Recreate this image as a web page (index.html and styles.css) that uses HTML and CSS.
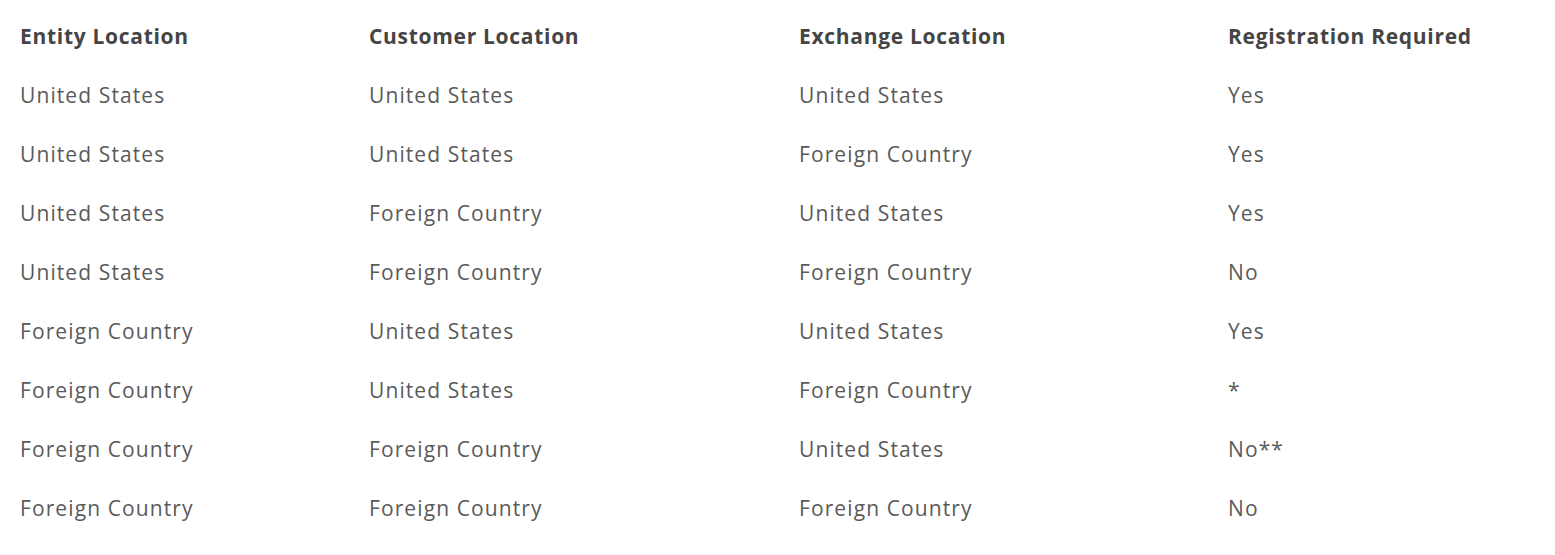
FILE: index.html
```html
<!DOCTYPE html>
<html lang="en">
<head>
<meta charset="utf-8">
<title>Registration Table</title>
<link rel="stylesheet" href="styles.css">
</head>
<body>
<table class="reg-table">
  <thead>
    <tr>
      <th class="col-entity">Entity Location</th>
      <th class="col-customer">Customer Location</th>
      <th class="col-exchange">Exchange Location</th>
      <th class="col-reg">Registration Required</th>
    </tr>
  </thead>
  <tbody>
    <tr><td>United States</td><td>United States</td><td>United States</td><td>Yes</td></tr>
    <tr><td>United States</td><td>United States</td><td>Foreign Country</td><td>Yes</td></tr>
    <tr><td>United States</td><td>Foreign Country</td><td>United States</td><td>Yes</td></tr>
    <tr><td>United States</td><td>Foreign Country</td><td>Foreign Country</td><td>No</td></tr>
    <tr><td>Foreign Country</td><td>United States</td><td>United States</td><td>Yes</td></tr>
    <tr><td>Foreign Country</td><td>United States</td><td>Foreign Country</td><td>*</td></tr>
    <tr><td>Foreign Country</td><td>Foreign Country</td><td>United States</td><td>No**</td></tr>
    <tr><td>Foreign Country</td><td>Foreign Country</td><td>Foreign Country</td><td>No</td></tr>
  </tbody>
</table>
</body>
</html>
```

FILE: styles.css
```css
html, body {
  margin: 0;
  padding: 0;
  background: #ffffff;
}

body {
  padding: 6px 8px;
  font-family: "Open Sans", "Liberation Sans", sans-serif;
}

.reg-table {
  border-collapse: collapse;
  table-layout: fixed;
  width: 1539px;
}

.reg-table th,
.reg-table td {
  box-sizing: border-box;
  text-align: left;
  padding: 0 12px;
  height: 59px;
  vertical-align: middle;
  font-size: 21px;
}

.reg-table th {
  font-weight: 700;
  color: #454545;
  letter-spacing: 0.7px;
}

.reg-table td {
  font-weight: 400;
  color: #5a5a5a;
  letter-spacing: 1.1px;
}

.col-entity { width: 349px; }
.col-customer { width: 430px; }
.col-exchange { width: 429px; }
```
